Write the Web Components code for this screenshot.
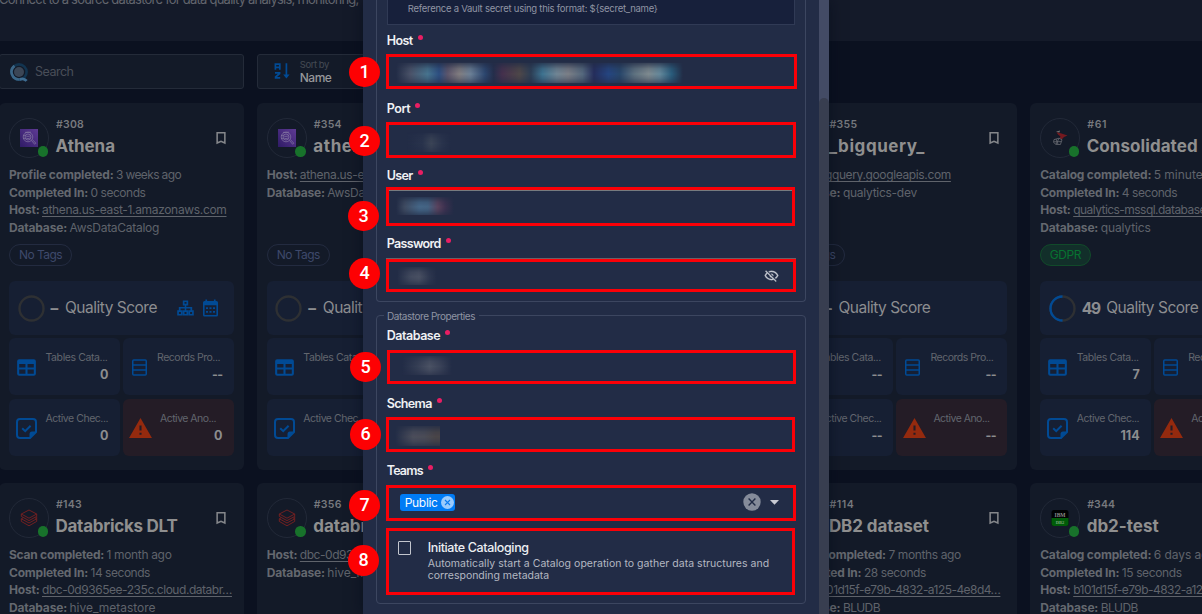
<!DOCTYPE html>
<html lang="en">
<head>
<meta charset="utf-8">
<title>Datastores</title>
<style>
html,body{margin:0;height:100%;overflow:hidden;background:#0b1120}
body{font-family:Inter,"Noto Sans",sans-serif;color:#5f636b;width:1202px;height:614px;position:relative}
</style>
</head>
<body>
<app-shell>
  <page-header><fit-text w="359.5">Connect to a source datastore for data quality analysis, monitoring,</fit-text>&nbsp; and more</page-header>
  <tool-bar></tool-bar>
  <card-grid>
    <store-card num="#308" numw="28" name="Athena" namew="59.5" logo="athena" icons>
      <detail-line label="Profile completed:" lw="104.5" w="65">3 weeks ago</detail-line>
      <detail-line label="Completed In:" lw="79" w="55">0 seconds</detail-line>
      <detail-line label="Host:" lw="30.5" w="184.5" link>athena.us-east-1.amazonaws.com</detail-line>
      <detail-line label="Database:" lw="58" w="89.5">AwsDataCatalog</detail-line>
    </store-card>
    <store-card num="#354" numw="28" name="athena" namew="61" logo="athena">
      <detail-line label="Host:" lw="30.5" w="184.5" link>athena.us-east-1.amazonaws.com</detail-line>
      <detail-line label="Database:" lw="58" w="89.5">AwsDataCatalog</detail-line>
    </store-card>
    <span></span>
    <store-card num="#355" numw="28" name="_bigquery_" namew="96" v1="--" v3="--" v4="--">
      <detail-line label="Host:" lw="30.5" w="135.5" link>bigquery.googleapis.com</detail-line>
      <detail-line label="Database:" lw="58" w="74">qualytics-dev</detail-line>
    </store-card>
    <store-card num="#61" numw="20" name="Consolidated" namew="111" logo="mssql" tag="GDPR" score="49" v1="7" v3="114">
      <detail-line label="Catalog completed:" lw="111" w="80">5 minutes ago</detail-line>
      <detail-line label="Completed In:" lw="79" w="55.5">4 seconds</detail-line>
      <detail-line label="Host:" lw="30.5" w="192" link>qualytics-mssql.database.windows…</detail-line>
      <detail-line label="Database:" lw="58" w="50">qualytics</detail-line>
    </store-card>
    <store-card num="#143" numw="26" name="Databricks DLT" namew="122" logo="databricks">
      <detail-line label="Scan completed:" lw="95" w="65">1 month ago</detail-line>
      <detail-line label="Completed In:" lw="79" w="59.5">14 seconds</detail-line>
      <detail-line label="Host:" lw="30.5" w="190" link>dbc-0d9365ee-235c.cloud.databr…</detail-line>
      <detail-line label="Database:" lw="58" w="86">hive_metastore</detail-line>
    </store-card>
    <store-card num="#356" numw="28" name="databricks" namew="88" logo="databricks">
      <detail-line label="Host:" lw="30.5" w="190" link>dbc-0d9365ee-235c.cloud.databr…</detail-line>
      <detail-line label="Database:" lw="58" w="86">hive_metastore</detail-line>
    </store-card>
    <span></span>
    <store-card num="#114" numw="25" name="DB2 dataset" namew="100">
      <detail-line label="Profile completed:" lw="103.5" w="72.5">7 months ago</detail-line>
      <detail-line label="Completed In:" lw="79" w="62">28 seconds</detail-line>
      <detail-line label="Host:" lw="30.5" w="185" link>b101d15f-e79b-4832-a125-4e8d4…</detail-line>
      <detail-line label="Database:" lw="58" w="37">BLUDB</detail-line>
    </store-card>
    <store-card num="#344" numw="28" name="db2-test" namew="72" logo="ibm">
      <detail-line label="Catalog completed:" lw="111" w="62">6 days ago</detail-line>
      <detail-line label="Completed In:" lw="79" w="60">15 seconds</detail-line>
      <detail-line label="Host:" lw="30.5" w="185" link>b101d15f-e79b-4832-a125-4e8d4…</detail-line>
      <detail-line label="Database:" lw="58" w="37">BLUDB</detail-line>
    </store-card>
  </card-grid>
</app-shell>

<app-drawer>
  <field-group class="first">
    <vault-hint><fit-text w="250">Reference a Vault secret using this format: ${secret_name}</fit-text></vault-hint>
    <form-field label="Host" lw="26" n="1" cx="-21" cy="42" style="--mt:5px;--gap:3.5px;--h:35.5px;--w:411px"><smudge-mark kind="host"></smudge-mark></form-field>
    <form-field label="Port" lw="23.5" n="2" cx="-21" cy="43.2" style="--mt:9px;--gap:4px;--h:35.5px;--w:410.4px"><smudge-mark kind="port"></smudge-mark></form-field>
    <form-field label="User" lw="26" n="3" cx="-22" cy="51" style="--mt:7.5px;--gap:2px;--h:39px;--w:409.4px" line><smudge-mark kind="user"></smudge-mark></form-field>
    <form-field label="Password" lw="54" n="4" cx="-21" cy="40.3" style="--mt:7px;--gap:6px;--h:33px;--w:410.4px" outline><smudge-mark kind="pass"></smudge-mark><eye-icon></eye-icon></form-field>
  </field-group>
  <field-group class="second" legend="Datastore Properties">
    <form-field label="Database" lw="53.5" n="5" cx="-20" cy="42" style="--mt:2px;--gap:5px;--h:34px;--w:409.4px;--x:1px"><smudge-mark kind="db"></smudge-mark></form-field>
    <form-field label="Schema" lw="45" n="6" cx="-20" cy="41.3" style="--mt:9px;--gap:4px;--h:35px;--w:409px"><smudge-mark kind="schema"></smudge-mark></form-field>
    <form-field label="Teams" lw="36" n="7" cx="-21" cy="45.3" style="--mt:8px;--gap:4.5px;--h:36.5px;--w:410.4px"><team-select></team-select></form-field>
    <form-field n="8" cx="-22" cy="33" style="--mt:6.5px;--gap:0px;--h:67px;--w:409.4px"><check-option></check-option></form-field>
  </field-group>
</app-drawer>

<script>
class Base extends HTMLElement{
  connectedCallback(){
    if(this.shadowRoot)return;
    this.attachShadow({mode:'open'}).innerHTML=this.render();
  }
  a(n,d=''){return this.hasAttribute(n)?this.getAttribute(n):d}
}
const def=(name,fn)=>customElements.define(name,class extends Base{render(){return fn(this)}});

/* One line of text, tracked so that it takes up the width in its "w" attribute. */
customElements.define('fit-text',class extends Base{
  render(){return `<style>:host{display:inline-block;white-space:pre}span{display:inline-block}:host([line]) span{text-decoration:underline;text-decoration-thickness:1px;text-underline-offset:2px;text-decoration-skip-ink:none}</style><span><slot></slot></span>`}
  connectedCallback(){
    super.connectedCallback();
    const w=+this.getAttribute('w'),s=this.shadowRoot.querySelector('span'),n=this.textContent.length;
    if(!w||!n)return;
    const fit=()=>{s.style.letterSpacing='0';const r=s.getBoundingClientRect().width;if(r)s.style.letterSpacing=((w-r)/n).toFixed(3)+'px'};
    requestAnimationFrame(fit);fit();
  }
});

def('app-shell',()=>`<style>:host{display:block;width:1202px;height:614px;overflow:hidden}</style><slot></slot>`);
def('page-header',()=>`<style>:host{display:block;box-sizing:border-box;height:41px;background:#141a29;font-size:13px;line-height:18px;white-space:nowrap;overflow:hidden}
div{margin:-10px 0 0 -1px;color:#62656d}</style><div><slot></slot></div>`);
def('tool-bar',()=>`<style>
:host{display:flex;gap:12.8px;padding:13px 0 14px;margin-left:-1px;width:1300px}
div{box-sizing:border-box;height:35px;width:245px;border:1px solid #242b39;border-radius:3px;background:#131a28;display:flex;align-items:center}
.s{padding:0 0 1px 10px;gap:7px;font-size:12.5px;color:#494e58}
.s svg{margin-top:1px}
.o{padding:0 0 2px 16.5px;gap:8.5px}
.o svg{margin-top:1px}
.t{display:flex;flex-direction:column;font-size:9.5px;line-height:13px;color:#454a54}
.t b{font-weight:500;font-size:12px;color:#96979a}
</style>
<div class="s"><svg width="18" height="20" viewBox="0 0 18 20"><circle cx="9" cy="10" r="5" fill="#3b4656"/><circle cx="9" cy="10" r="7.6" fill="none" stroke="#123450" stroke-width="2.6"/><path d="M9.5 17.5A7.6 7.6 0 0 1 4.5 3.9" fill="none" stroke="#3b6687" stroke-width="2.6"/><path d="M9.5 17.4C12 17 13.5 15.5 16.6 18.9" fill="none" stroke="#3f6d92" stroke-width="2.8"/></svg><fit-text w="38.5">Search</fit-text></div>
<div class="o"><svg width="17" height="16" viewBox="0 0 17 16" fill="none" stroke="#014a94" stroke-width="1.7"><path d="M1.4 6.8V1.2H5.8V6.8M1.4 4.4H5.8M1 9.8H5.6V10.5L1.6 14V14.8H6.2M12.4 .3V13"/><path d="M9.2 11.4H15.6L12.4 15.6Z" fill="#014a94" stroke="none"/></svg>
<span class="t"><fit-text w="29">Sort by</fit-text><b><fit-text w="31.5">Name</fit-text></b></span></div>`);
def('card-grid',()=>`<style>:host{display:grid;grid-template-columns:repeat(5,245px);grid-auto-rows:367px;gap:13px 12.8px;margin-left:-1px;width:1300px}</style><slot></slot>`);

def('detail-line',e=>`<style>
:host{display:flex;gap:2.5px;height:17.7px;line-height:17.7px;font-size:12px;white-space:nowrap;color:#5f636b}
b{font-weight:700;color:#64686f}
</style><b><fit-text w="${e.a('lw')}">${e.a('label')}</fit-text></b><fit-text ${e.hasAttribute('link')?'line':''} w="${e.a('w')}">${e.textContent}</fit-text>`);

const logos={
athena:`<svg width="18" height="18" viewBox="0 0 18 18"><defs><linearGradient id="g" x1="0" y1="1" x2="1" y2="0"><stop stop-color="#2f1b66"/><stop offset="1" stop-color="#5e3a94"/></linearGradient></defs><path fill="url(#g)" d="M0 0H18V18H0Z"/><g fill="none" stroke="#8579a4" stroke-width=".7"><circle cx="8" cy="8" r="4.8"/><circle cx="8" cy="8" r="3"/><path d="M5.6 6.8C7 7.6 9 7.6 10.4 6.8M5.6 8.8C7 9.8 9 9.8 10.4 8.8M3 6.4H5M3 9.4H5M5 3.4L11 3.2M11.4 11.4L14.6 15.2L15.8 14.2L12.4 10.6"/></g></svg>`,
databricks:`<svg width="18" height="18" viewBox="0 0 18 18" fill="none" stroke="#7a2020" stroke-width=".9"><path d="M1.3 5L9 1L16.7 5L9 9.2ZM1.3 5V7.4L9 11.6L16.7 7.4V5M1.3 9.8L9 14L16.7 9.8V7.6M1.3 9.8V12.4L9 16.8L16.7 12.4V10M1.3 9.8L3 8.8M16.7 9.8L15 8.8"/></svg>`,
mssql:`<svg width="18" height="18" viewBox="0 0 18 18"><path fill="#74191f" d="M5.5 3.2L9 4L16.5 6.6L13 8L10.6 10.6L8.6 8.8L9.5 7.6L7 5.5Z"/><path d="M5 2.8L9 1.6L8.4 3.6Z" fill="#777"/><g fill="none" stroke="#676a71" stroke-width=".8"><path d="M3 10.6L8 9.2L11 10.8L9.4 15.5L5 15.4L2.5 13.4Z"/><path d="M5 10L7 15.3M3 12.8L10.3 12.6M8 9.3L5 15.3"/></g></svg>`,
ibm:`<svg width="18" height="18" viewBox="0 0 18 18"><rect x=".5" y="1" width="17" height="16" rx="2.5" fill="#010203"/><path d="M.5 9H17.5V14.5A2.5 2.5 0 0 1 15 17H3A2.5 2.5 0 0 1 .5 14.5Z" fill="#005c08"/><text x="9" y="7.8" font-family="Liberation Serif" font-weight="700" font-size="5.5" text-anchor="middle" fill="#8a8a8a">IBM</text><text x="9" y="14.6" font-family="Liberation Serif" font-weight="700" font-size="4.5" text-anchor="middle" fill="#7ea57f">DB2</text></svg>`,
'':''};
const B='#014a94';
const ic={
table:`<svg width="25" height="25" viewBox="0 0 24 24" fill="${B}"><path d="M5,4H19A2,2 0 0,1 21,6V18A2,2 0 0,1 19,20H5A2,2 0 0,1 3,18V6A2,2 0 0,1 5,4M5,8.6V12H11V8.6H5M13,8.6V12H19V8.6H13M5,14V18H11V14H5M13,14V18H19V14H13Z"/></svg>`,
rows:`<svg width="15" height="17" viewBox="0 0 15 17" fill="none" stroke="${B}" stroke-width="1.5"><rect x=".75" y=".9" width="13.5" height="15.2" rx="1"/><path d="M1 6H14M1 11H14"/></svg>`,
check:`<svg width="21" height="21" viewBox="0 0 21 21" fill="none" stroke="${B}" stroke-width="2"><path d="M4 1H17A3 3 0 0 1 20 4V14L14 20H4A3 3 0 0 1 1 17V4A3 3 0 0 1 4 1Z"/><path d="M13.5 20V16A2.5 2.5 0 0 1 16 13.5H20Z" fill="${B}" stroke="none"/><path d="M6.2 10.2L9.2 13.2L14.6 7.7"/></svg>`,
alert:`<svg width="25" height="25" viewBox="0 0 24 24" fill="#942a0e"><path d="M13 14H11V9H13M13 18H11V16H13M1 21H23L12 2L1 21Z"/></svg>`,
book:`<svg width="16" height="16" viewBox="0 0 24 24" fill="none" stroke="#85878b" stroke-width="2.3"><path d="M6.2 4.2H17.8V19.6L12 17L6.2 19.6Z"/></svg>`,
map:`<svg width="17" height="16" viewBox="0 0 17 16"><path d="M5.8 .4H11.2V5.4H9.3V7H15.2V10.3H16.8V15.6H11.4V10.3H13.4V8.6H9.3V10.3H11.2V15.6H5.8V10.3H7.7V8.6H3.6V10.3H5.6V15.6H.2V10.3H1.8V7H7.7V5.4H5.8Z" fill="${B}"/><path d="M7.5 2H9.5V3.8H7.5ZM1.9 12H3.9V13.9H1.9ZM7.5 12H9.5V13.9H7.5ZM13.1 12H15.1V13.9H13.1Z" fill="#161f33"/></svg>`,
cal:`<svg width="15" height="18" viewBox="0 0 15 18"><path d="M2.4 .4H4.1V2H10.9V.4H12.6V2H13.5A1.5 1.5 0 0 1 15 3.5V16A1.5 1.5 0 0 1 13.5 17.5H1.5A1.5 1.5 0 0 1 0 16V3.5A1.5 1.5 0 0 1 1.5 2H2.4ZM1.6 6.2V15.9H13.4V6.2Z" fill="${B}" fill-rule="evenodd"/><path d="M3 8.2H5V10H3ZM6.5 8.2H8.5V10H6.5ZM10 8.2H12V10H10ZM3 12H5V13.8H3ZM6.5 12H8.5V13.8H6.5ZM10 12H12V13.8H10Z" fill="${B}"/></svg>`};

def('stat-tile',e=>`<style>
:host{box-sizing:border-box;display:flex;border-radius:6px;background:#161f33;height:57px;padding:11.5px 11.5px 0 0;min-width:0}
:host([kind=alert]){background:#241c26}
.i{width:var(--iw,36.5px);height:35px;padding-right:1.4px;display:flex;align-items:center;justify-content:center;flex:none;box-sizing:border-box}
.t{flex:1;display:flex;flex-direction:column;font-size:10.5px;line-height:16px;color:#62666e}
b{align-self:flex-end;font-size:12.5px;line-height:17px;font-weight:700;color:#8c8d8f}
b.e{letter-spacing:-.6px}
</style><div class="i">${ic[e.a('kind')]}</div><div class="t"><fit-text w="${e.a('w')}">${e.textContent}</fit-text><b class="${e.a('v')=='--'?'e':''}">${e.a('v')}</b></div>`);

def('store-card',e=>{
const score=e.a('score'),tag=e.a('tag');
return `<style>
:host{box-sizing:border-box;display:flex;flex-direction:column;background:#131a28;border-radius:6px;padding:15px 10px 0 10px;height:367px;min-width:0}
header{display:flex;height:40px;position:relative}
.av{box-sizing:border-box;width:40px;height:40px;border:1px solid #222938;border-radius:50%;display:flex;align-items:center;justify-content:center;position:relative}
.av i{position:absolute;right:0;bottom:.5px;width:10.5px;height:10.5px;border-radius:50%;background:#18722b}
.h{flex:1;margin-left:7px;display:flex;flex-direction:column;white-space:nowrap}
.n{font-size:10.5px;font-weight:600;line-height:13px;color:#77797e}
.nm{font-size:17px;font-weight:700;line-height:26px;margin-top:1.7px;margin-left:-.5px;color:#8f8f8f}
.bk{align-self:center;margin-right:5px;display:flex;height:16px}
.d{height:71px;margin-top:8px}
.tg{box-sizing:border-box;align-self:flex-start;margin-top:7px;height:22px;line-height:20px;padding:0 9px;border:1px solid #232b40;border-radius:11px;font-size:12px;color:#3e496b}
.tg.g{border-color:#114a2a;background:#122f2a;color:#077331;padding:0 8.5px}
.q{box-sizing:border-box;margin-top:15px;height:54px;background:#161f33;border-radius:6px;display:flex;align-items:center;padding:0 16px 0 8.5px;font-size:15.5px;color:#8c8d90}
.q fit-text{margin-top:-1px}
.q .x{margin:0 6.5px 0 6px;font-weight:700}
.q .ic{margin-left:auto;display:flex;gap:9px;align-items:center}
.g2{display:grid;grid-template-columns:1fr 1fr;gap:4px 3px;margin-top:3px}
</style>
<header><div class="av">${logos[e.a('logo')]}<i></i></div><div class="h"><span class="n"><fit-text w="${e.a('numw')}">${e.a('num')}</fit-text></span><span class="nm"><fit-text w="${e.a('namew')}">${e.a('name')}</fit-text></span></div><span class="bk">${e.a('name')=='Consolidated'?'':ic.book}</span></header>
<div class="d"><slot></slot></div>
<span class="tg ${tag?'g':''}"><fit-text w="${tag?31.5:43}">${tag||'No Tags'}</fit-text></span>
<div class="q"><svg width="27" height="27" viewBox="0 0 27 27" fill="none" stroke-width="2.4"><circle cx="13.5" cy="13.5" r="12" stroke="#2e3033"/>${score?'<path d="M13.5 1.5A12 12 0 1 0 13.5 25.5" stroke="#014a94"/>':''}</svg><span class="x"><fit-text w="${score?18:8}">${score||'–'}</fit-text></span><fit-text w="92">Quality Score</fit-text>${e.hasAttribute('icons')?`<span class="ic">${ic.map}${ic.cal}</span>`:''}</div>
<div class="g2"><stat-tile kind="table" w="62" v="${e.a('v1','0')}">Tables Cata...</stat-tile><stat-tile kind="rows" w="63" v="--" style="--iw:34px">Records Pro...</stat-tile>
<stat-tile kind="check" w="62.5" v="${e.a('v3','0')}">Active Chec...</stat-tile><stat-tile kind="alert" w="56" v="${e.a('v4','0')}" style="--iw:37px">Active Ano...</stat-tile></div>`});

def('app-drawer',()=>`<style>
:host{position:absolute;left:363px;top:0;width:466px;height:614px;display:flex;background:#222c46;box-shadow:0 0 14px rgba(4,10,24,.55);overflow:visible}
main{flex:1;padding-left:13px;min-width:0}
aside{width:10px;background:#434b65;display:flex;flex-direction:column}
aside i{margin-top:98px;flex:1;background:#383e50;border-radius:5px 5px 0 0}
</style><main><slot></slot></main><aside><i></i></aside>`);
def('field-group',e=>`<style>
:host{display:block;width:430px}
fieldset{box-sizing:border-box;margin:0;padding:0 0 0 8.7px;border:1px solid #3c4660;border-radius:4px;width:430px;min-width:0}
:host(.first) fieldset{border-top:0;border-radius:0 0 4px 4px;height:302px}
:host(.second){margin-top:6.5px}
:host(.second) fieldset{height:295px;padding-top:.5px}
legend{margin-left:-2.2px;padding:0 3.5px;font-size:10px;line-height:14px;height:14px;color:#8f94a3}
</style><fieldset>${e.a('legend')?`<legend><fit-text w="88">${e.a('legend')}</fit-text></legend>`:''}<slot></slot></fieldset>`);
def('vault-hint',()=>`<style>:host{display:block;box-sizing:border-box;margin-left:1px;width:408.5px;height:25px;border:1px solid #303a55;border-top:0;background:#17203b;padding:2px 0 0 20px;font-size:9.5px;line-height:14px;color:#9094a3}</style><slot></slot>`);
def('form-field',e=>`<style>
:host{display:block;position:relative;padding-top:var(--mt)}
.l{display:flex;height:20px;line-height:21px;margin-left:1px;font-size:12.5px;font-weight:600;color:#f0f1f4}
.l i{width:5px;height:5px;border-radius:50%;background:#e91e63;margin:5px 0 0 5px}
.b{box-sizing:border-box;margin:var(--gap) 0 0 var(--x,0px);width:var(--w);height:var(--h);border:3px solid #fb0007;display:flex;align-items:center;position:relative}
:host([line]) .b{box-shadow:inset 0 1px #777b7f}
:host([outline]) .b{box-shadow:0 -1px #6b6066}
.n{position:absolute;left:${+e.a('cx')-15.3}px;top:calc(var(--mt) + ${+e.a('cy')-15.3}px);width:30.6px;height:30.6px;border-radius:50%;background:#fd0103;color:#fff;font:500 18px/30.6px Roboto,sans-serif;text-align:center}
</style>${e.a('label')?`<div class="l"><fit-text w="${e.a('lw')}">${e.a('label')}</fit-text><i></i></div>`:''}<div class="b"><slot></slot></div><span class="n">${e.a('n')}</span>`);

/* Redacted values: soft colour bands. */
const sm={
host:[7,287,21,1.5,'#222c46,#4b5369 5%,#47748f 11%,#2d4f82 15%,#5d566c 18%,#827d80 22%,#6c8097 26%,#2c466f 31%,#252e4b 34%,#45304d 37%,#4f4748 43%,#2d3e55 47%,#3e7391 51%,#718695 56%,#7c7f87 60%,#56697e 65%,#252d5c 69%,#254581 74%,#28466b 78%,#5e7180 83%,#7f8b90 88%,#64889b 92%,#2a5d7d 96%,#222c46'],
port:[18,44,20,2.5,'#222c46,#29334c 35%,#3b4456 55%,#29334c 80%,#222c46'],
user:[7,58,18,-1,'#222c46,#3f4b61 15%,#456788 40%,#446484 55%,#5a425d 72%,#3c3150 85%,#222c46'],
pass:[8,40,18,0,'#222c46,#434b5f 35%,#4a5163 55%,#2f3850 80%,#222c46'],
db:[12,50,20,-1.5,'#222c46,#353e54 30%,#4b5264 55%,#3c4459 75%,#222c46'],
schema:[6,45,20,1,'#222c46,#4c4e5b 40%,#4b4c57 65%,#4a4548 90%,#4a4548']};
def('smudge-mark',e=>{const[x,w,h,y,g]=sm[e.a('kind')];return `<style>:host{display:block;margin-left:${x}px;width:${w}px;height:${h}px;transform:translateY(${y}px);background:linear-gradient(90deg,${g});-webkit-mask:linear-gradient(rgba(0,0,0,.2),rgba(0,0,0,.8) 30%,#000 55%,rgba(0,0,0,.8) 75%,rgba(0,0,0,.35));filter:blur(.4px)}</style>`});
def('eye-icon',()=>`<style>:host{display:flex;margin-left:auto;margin-right:14px}</style><svg width="15" height="15" viewBox="0 0 24 24" fill="#c3c6cf" stroke="#c3c6cf" stroke-width=".4"><path d="M2,5.27L3.28,4L20,20.72L18.73,22L15.65,18.92C14.5,19.3 13.28,19.5 12,19.5C7,19.5 2.73,16.39 1,12C1.69,10.24 2.79,8.69 4.19,7.46L2,5.27M12,9A3,3 0 0,1 15,12C15,12.35 14.94,12.69 14.83,13L11,9.17C11.31,9.06 11.65,9 12,9M12,4.5C17,4.5 21.27,7.61 23,12C22.18,14.08 20.79,15.88 19,17.19L17.58,15.76C18.94,14.82 20.06,13.54 20.82,12C19.17,8.64 15.76,6.5 12,6.5C10.91,6.5 9.84,6.68 8.84,7L7.3,5.47C8.74,4.85 10.33,4.5 12,4.5M3.18,12C4.83,15.36 8.24,17.5 12,17.5C12.69,17.5 13.37,17.43 14,17.29L11.72,15C10.29,14.85 9.15,13.71 9,12.28L5.6,8.87C4.61,9.72 3.78,10.78 3.18,12Z"/></svg>`);
def('team-select',()=>`<style>
:host{display:flex;flex:1;align-items:center;padding:0 14px 1px 11px}
.c{box-sizing:border-box;height:17px;width:55px;border-radius:3px;background:#007bf5;color:#f4f9ff;font-size:12px;line-height:17px;padding-left:5px;display:flex;align-items:center;gap:3px}
.r{margin-left:auto;display:flex;align-items:center;gap:9px}
</style><span class="c"><fit-text w="33">Public</fit-text><svg width="13" height="13" viewBox="0 0 13 13"><circle cx="6.5" cy="6.5" r="6.5" fill="#9bcbfc"/><path d="M4 4L9 9M9 4L4 9" stroke="#0b7cf0" stroke-width="1.1"/></svg></span>
<span class="r"><svg width="18" height="18" viewBox="0 0 18 18"><circle cx="9" cy="9" r="8.7" fill="#858b9a"/><path d="M5.6 5.6L12.4 12.4M12.4 5.6L5.6 12.4" stroke="#222c46" stroke-width="1.4"/></svg><svg width="9" height="5" viewBox="0 0 9 5"><path d="M0 0H9L4.5 4.7Z" fill="#c8cad2"/></svg></span>`);
def('check-option',()=>`<style>
:host{display:flex;flex:1;align-self:flex-start;padding:8.7px 0 0 9px}
i{box-sizing:border-box;width:13px;height:14px;border:1.5px solid #c3c6ce;border-radius:1px;margin:1.5px 17px 0 0}
div{display:flex;flex-direction:column;font-size:10.5px;line-height:12px;color:#b4b8c2}
b{font-weight:500;font-size:12.5px;line-height:18px;color:#eceef2;margin-bottom:1.2px}
</style><i></i><div><b><fit-text w="101">Initiate Cataloging</fit-text></b><fit-text w="341.5">Automatically start a Catalog operation to gather data structures and</fit-text><fit-text w="121.5">corresponding metadata</fit-text></div>`);
</script>
</body>
</html>
